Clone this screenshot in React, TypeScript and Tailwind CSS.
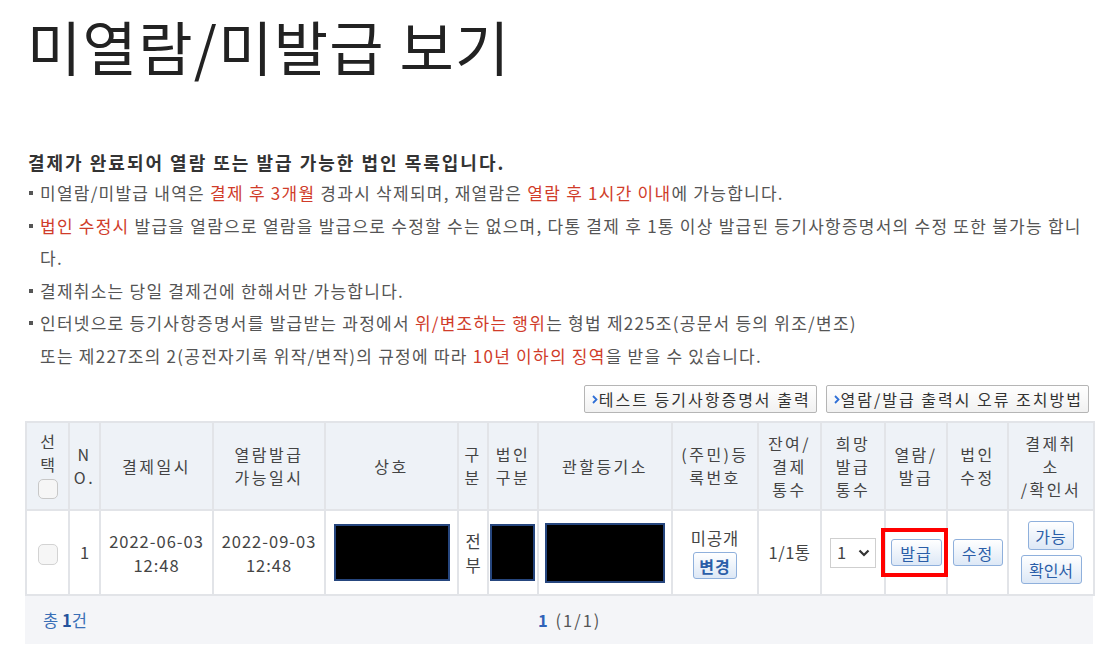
import React from 'react';

const FONT = { fontFamily: '"Noto Sans CJK KR", "Noto Sans", sans-serif' };

const cols = [43, 31, 113, 112, 133, 30, 50, 134, 86, 63, 64, 62, 61, 86];

const HEADS: React.ReactNode[] = [
  null,
  <>N<br />O.</>,
  '결제일시',
  <>열람발급<br />가능일시</>,
  '상호',
  <>구<br />분</>,
  <>법인<br />구분</>,
  '관할등기소',
  <>(주민)등<br />록번호</>,
  <>잔여/<br />결제<br />통수</>,
  <>희망<br />발급<br />통수</>,
  <>열람/<br />발급</>,
  <>법인<br />수정</>,
  <>결제취<br />소<br />/확인서</>,
];

function Red({ children }: { children: React.ReactNode }) {
  return <span className="text-[#d03c2a]">{children}</span>;
}

function Bullet({ children }: { children: React.ReactNode }) {
  return (
    <li className="relative pl-[12px] leading-[32.5px]">
      <span className="absolute left-[1px] top-[14px] w-[4px] h-[4px] bg-[#555]" />
      {children}
    </li>
  );
}

function BlueBtn({ children, className = '' }: { children: React.ReactNode; className?: string }) {
  return (
    <span
      className={`inline-flex items-center justify-center h-[27px] px-[5px] rounded-[3px] border border-[#8fb0dc] bg-gradient-to-b from-white to-[#dde8f6] text-[#2b5ea8] text-[16px] leading-none whitespace-nowrap ${className}`}
    >
      {children}
    </span>
  );
}

function GrayBtn({ children }: { children: React.ReactNode }) {
  return (
    <span className="inline-flex items-center h-[28px] pl-[7px] pr-[5px] border border-[#b5b5b5] rounded-[2px] bg-gradient-to-b from-white to-[#f1f1f1] text-[#333] text-[16px] tracking-[2px]">
      <svg width="6" height="9" viewBox="0 0 6 9" className="mr-[1px]">
        <path d="M1 1l3.5 3.5L1 8" fill="none" stroke="#2f6fd6" strokeWidth="1.8" />
      </svg>
      {children}
    </span>
  );
}

function Redacted({ w, h }: { w: number; h: number }) {
  return <div className="mx-auto bg-black border-2 border-[#26467e]" style={{ width: w, height: h }} />;
}

export default function App() {
  return (
    <div className="w-[1119px] h-[662px] bg-white overflow-hidden px-[25px] text-[#444]" style={FONT}>
      <h1 className="pt-[10px] pl-[2px] text-[59px] leading-[72px] font-normal text-[#222] tracking-[1.3px]">
        미열람/미발급 보기
      </h1>

      <p className="mt-[68px] pl-[3px] text-[18px] font-bold text-[#333] leading-[24px] tracking-[2px]">
        결제가 완료되어 열람 또는 발급 가능한 법인 목록입니다.
      </p>

      <ul className="mt-[3px] pl-[3px] text-[17px] text-[#555] tracking-[1.25px]">
        <Bullet>
          미열람/미발급 내역은 <Red>결제 후 3개월</Red> 경과시 삭제되며, 재열람은 <Red>열람 후 1시간 이내</Red>에 가능합니다.
        </Bullet>
        <Bullet>
          <span className="whitespace-nowrap">
            <Red>법인 수정시</Red> 발급을 열람으로 열람을 발급으로 수정할 수는 없으며, 다통 결제 후 1통 이상 발급된 등기사항증명서의 수정 또한 불가능 합니
          </span>
          <br />다.
        </Bullet>
        <Bullet>결제취소는 당일 결제건에 한해서만 가능합니다.</Bullet>
        <Bullet>
          인터넷으로 등기사항증명서를 발급받는 과정에서 <Red>위/변조하는 행위</Red>는 형법 제225조(공문서 등의 위조/변조)
          <br />
          또는 제227조의 2(공전자기록 위작/변작)의 규정에 따라 <Red>10년 이하의 징역</Red>을 받을 수 있습니다.
        </Bullet>
      </ul>

      <div className="mt-[13px] flex justify-end gap-[9px] pr-[5px]">
        <GrayBtn>테스트 등기사항증명서 출력</GrayBtn>
        <GrayBtn>열람/발급 출력시 오류 조치방법</GrayBtn>
      </div>

      <table className="mt-[8px] w-[1068px] table-fixed border-collapse border-2 border-[#e2e4e8] text-[16.5px] text-[#444]">
        <colgroup>
          {cols.map((w, i) => (
            <col key={i} style={{ width: w }} />
          ))}
        </colgroup>
        <thead>
          <tr className="h-[88px] bg-[#eef2f7]">
            <th className="border-2 border-[#e2e4e8] font-normal align-top pt-[7px] text-[16px]">
              <div className="flex flex-col items-center">
                <span className="leading-[23px]">선<br />택</span>
                <span className="mt-[3px] w-[20px] h-[20px] rounded-[5px] border border-[#c8c8c8] bg-[#f6f6f6]" />
              </div>
            </th>
            {HEADS.slice(1).map((h, i) => (
              <th key={i} className="border-2 border-[#e2e4e8] font-normal leading-[23px] align-middle text-[16px] tracking-[2.5px]">
                {h}
              </th>
            ))}
          </tr>
        </thead>
        <tbody>
          <tr className="h-[85px] text-center">
            <td className="border-2 border-[#e2e4e8]">
              <span className="inline-block w-[20px] h-[21px] rounded-[5px] border border-[#d3d3d3] bg-[#f6f6f6] align-middle" />
            </td>
            <td className="border-2 border-[#e2e4e8]">1</td>
            <td className="border-2 border-[#e2e4e8] leading-[24px] tracking-[1px]">2022-06-03<br />12:48</td>
            <td className="border-2 border-[#e2e4e8] leading-[24px] tracking-[1px]">2022-09-03<br />12:48</td>
            <td className="border-2 border-[#e2e4e8]">
              <Redacted w={116} h={57} />
            </td>
            <td className="border-2 border-[#e2e4e8] leading-[24px]">전<br />부</td>
            <td className="border-2 border-[#e2e4e8]">
              <div className="ml-[1px] w-[45px] h-[57px] bg-black border-2 border-[#26467e]" />
            </td>
            <td className="border-2 border-[#e2e4e8]">
              <Redacted w={120} h={60} />
            </td>
            <td className="border-2 border-[#e2e4e8]">
              <div className="flex flex-col items-center">
                <span className="leading-[24px] tracking-[1px]">미공개</span>
                <BlueBtn className="mt-[2px] px-[4px] font-bold tracking-[1px]">변경</BlueBtn>
              </div>
            </td>
            <td className="border-2 border-[#e2e4e8] tracking-[0.5px]">1/1통</td>
            <td className="border-2 border-[#e2e4e8]">
              <span className="inline-flex items-center justify-between w-[46px] h-[30px] pl-[6px] pr-[5px] border border-[#cfcfcf] bg-white">
                1
                <svg width="12" height="8" viewBox="0 0 12 8">
                  <path d="M1.5 1.5L6 6l4.5-4.5" fill="none" stroke="#333" strokeWidth="2.2" />
                </svg>
              </span>
            </td>
            <td className="border-2 border-[#e2e4e8]">
              <span className="relative inline-block">
                <BlueBtn className="w-[51px] tracking-[1px]">발급</BlueBtn>
                <span className="absolute -left-[10px] -right-[6px] -top-[11px] -bottom-[11px] border-4 border-[#ff0000]" />
              </span>
            </td>
            <td className="border-2 border-[#e2e4e8]">
              <BlueBtn className="w-[50px] tracking-[1px]">수정</BlueBtn>
            </td>
            <td className="border-2 border-[#e2e4e8]">
              <div className="flex flex-col items-center gap-[5px]">
                <BlueBtn className="w-[46px] h-[29px] tracking-[1px]">가능</BlueBtn>
                <BlueBtn className="w-[61px] h-[29px] px-[3px]">확인서</BlueBtn>
              </div>
            </td>
          </tr>
        </tbody>
      </table>

      <div className="relative w-[1068px] h-[48px] bg-[#f4f5f8] flex items-center text-[16.5px]">
        <span className="pl-[18px] text-[#3a6fb6]">
          총 <b className="text-[#24539c]">1</b>건
        </span>
        <span className="absolute left-[513px] text-[#555] tracking-[2px]">
          <b className="text-[#2f62b8]">1</b> (1/1)
        </span>
      </div>
    </div>
  );
}
